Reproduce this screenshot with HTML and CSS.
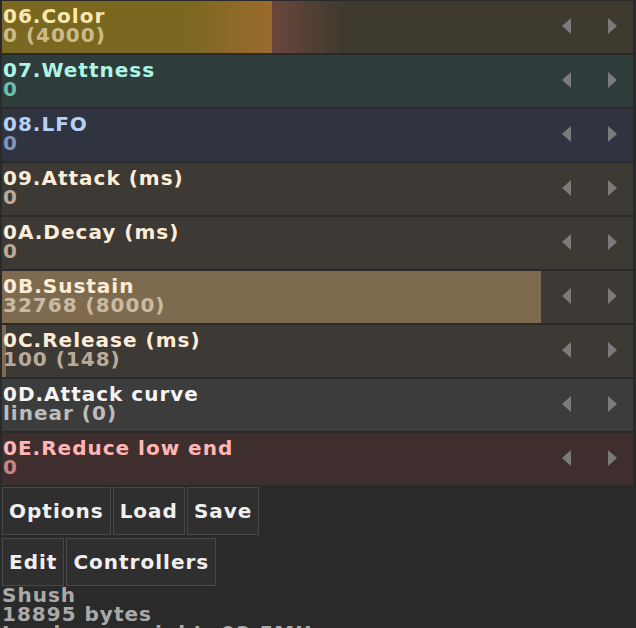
FILE: index.html
```html
<!DOCTYPE html>
<html>

<head>
    <meta charset="UTF-8">
    <title>Shush</title>
    <link rel="stylesheet" href="styles.css">
</head>

<body>

    <div class="params">
        <div class="param color">
            <div class="fill glow" style="width: 42.8%"></div>
            <div class="info">
                <div class="name">06.Color</div>
                <div class="value">0 (4000)</div>
            </div>
            <div class="arrows">
                <svg width="9" height="16" viewBox="0 0 9 16"><path d="M9 0 L0 8 L9 16 Z"/></svg>
                <svg width="9" height="16" viewBox="0 0 9 16"><path d="M0 0 L9 8 L0 16 Z"/></svg>
            </div>
        </div>

        <div class="param wet">
            <div class="info">
                <div class="name">07.Wettness</div>
                <div class="value">0</div>
            </div>
            <div class="arrows">
                <svg width="9" height="16" viewBox="0 0 9 16"><path d="M9 0 L0 8 L9 16 Z"/></svg>
                <svg width="9" height="16" viewBox="0 0 9 16"><path d="M0 0 L9 8 L0 16 Z"/></svg>
            </div>
        </div>

        <div class="param lfo">
            <div class="info">
                <div class="name">08.LFO</div>
                <div class="value">0</div>
            </div>
            <div class="arrows">
                <svg width="9" height="16" viewBox="0 0 9 16"><path d="M9 0 L0 8 L9 16 Z"/></svg>
                <svg width="9" height="16" viewBox="0 0 9 16"><path d="M0 0 L9 8 L0 16 Z"/></svg>
            </div>
        </div>

        <div class="param env">
            <div class="info">
                <div class="name">09.Attack (ms)</div>
                <div class="value">0</div>
            </div>
            <div class="arrows">
                <svg width="9" height="16" viewBox="0 0 9 16"><path d="M9 0 L0 8 L9 16 Z"/></svg>
                <svg width="9" height="16" viewBox="0 0 9 16"><path d="M0 0 L9 8 L0 16 Z"/></svg>
            </div>
        </div>

        <div class="param env">
            <div class="info">
                <div class="name">0A.Decay (ms)</div>
                <div class="value">0</div>
            </div>
            <div class="arrows">
                <svg width="9" height="16" viewBox="0 0 9 16"><path d="M9 0 L0 8 L9 16 Z"/></svg>
                <svg width="9" height="16" viewBox="0 0 9 16"><path d="M0 0 L9 8 L0 16 Z"/></svg>
            </div>
        </div>

        <div class="param env">
            <div class="fill" style="width: 85.4%"></div>
            <div class="info">
                <div class="name">0B.Sustain</div>
                <div class="value lit">32768 (8000)</div>
            </div>
            <div class="arrows">
                <svg width="9" height="16" viewBox="0 0 9 16"><path d="M9 0 L0 8 L9 16 Z"/></svg>
                <svg width="9" height="16" viewBox="0 0 9 16"><path d="M0 0 L9 8 L0 16 Z"/></svg>
            </div>
        </div>

        <div class="param env">
            <div class="fill" style="width: 0.65%"></div>
            <div class="info">
                <div class="name">0C.Release (ms)</div>
                <div class="value">100 (148)</div>
            </div>
            <div class="arrows">
                <svg width="9" height="16" viewBox="0 0 9 16"><path d="M9 0 L0 8 L9 16 Z"/></svg>
                <svg width="9" height="16" viewBox="0 0 9 16"><path d="M0 0 L9 8 L0 16 Z"/></svg>
            </div>
        </div>

        <div class="param curve">
            <div class="info">
                <div class="name">0D.Attack curve</div>
                <div class="value">linear (0)</div>
            </div>
            <div class="arrows">
                <svg width="9" height="16" viewBox="0 0 9 16"><path d="M9 0 L0 8 L9 16 Z"/></svg>
                <svg width="9" height="16" viewBox="0 0 9 16"><path d="M0 0 L9 8 L0 16 Z"/></svg>
            </div>
        </div>

        <div class="param low">
            <div class="info">
                <div class="name">0E.Reduce low end</div>
                <div class="value">0</div>
            </div>
            <div class="arrows">
                <svg width="9" height="16" viewBox="0 0 9 16"><path d="M9 0 L0 8 L9 16 Z"/></svg>
                <svg width="9" height="16" viewBox="0 0 9 16"><path d="M0 0 L9 8 L0 16 Z"/></svg>
            </div>
        </div>
    </div>

    <div class="btn-row first">
        <button class="btn">Options</button>
        <button class="btn">Load</button>
        <button class="btn">Save</button>
    </div>
    <div class="btn-row">
        <button class="btn">Edit</button>
        <button class="btn">Controllers</button>
    </div>

    <div class="status">
        <div>Shush</div>
        <div>18895 bytes</div>
        <div>Lua heap weight: 03.5MU</div>
    </div>

</body>

</html>
```

FILE: styles.css
```css
/* Basic Reset */
* {
    box-sizing: border-box;
    margin: 0;
    padding: 0;
}

body {
    font-family: "DejaVu Sans", sans-serif;
    font-weight: bold;
    font-size: 20px;
    line-height: 19px;
    letter-spacing: 1px;
    background: #2a2a2a;
    padding: 1px 3px 0 2px;
    overflow: hidden;
}

.params {
    display: flex;
    flex-direction: column;
    gap: 2px;
}

.param {
    position: relative;
    display: flex;
    align-items: center;
    height: 52px;
    background: #3d3934;
}

.fill {
    position: absolute;
    left: 0;
    top: 0;
    bottom: 0;
    background: #7e6b4f;
}

.fill.glow {
    background: linear-gradient(to right, #7a6820 0%, #7a6820 68%, #9c6b2c 100%);
}

.fill.glow::after {
    content: "";
    position: absolute;
    left: 100%;
    top: 0;
    bottom: 0;
    width: 70px;
    background: linear-gradient(to right, #6b463c, rgba(63, 58, 47, 0));
}

.info {
    position: relative;
    flex: 1;
    padding: 0 0 2px 1px;
    white-space: nowrap;
}

.arrows {
    position: relative;
    display: flex;
    align-items: center;
    gap: 37px;
    padding: 0 16px 2px 0;
}

.arrows svg {
    display: block;
    fill: #7b7b7b;
}

/* row colours */
.color { background: #3f3a2f; }
.color .name { color: #fbe7b0; }
.color .value { color: #cbbb88; }

.wet { background: #2e3d3b; }
.wet .name { color: #aef5e6; }
.wet .value { color: #6dbdad; }

.lfo { background: #2f3440; }
.lfo .name { color: #b8cff7; }
.lfo .value { color: #7f95bd; }

.env .name { color: #fcecd8; }
.env .value { color: #b9ab98; }
.env .value.lit { color: #c9baa3; }

.curve { background: #3c3c3c; }
.curve .name { color: #f5f5f5; }
.curve .value { color: #bdbdbd; }

.low { background: #3f2e2e; }
.low .name { color: #ffb6b6; }
.low .value { color: #c98585; }

.btn-row {
    display: flex;
    gap: 2px;
    margin-top: 3px;
}

.btn-row.first {
    margin-top: 2px;
}

.btn {
    font: inherit;
    letter-spacing: inherit;
    height: 48px;
    padding: 0 6px;
    background: #2f2f2f;
    border: 1px solid #484848;
    color: #f0f0f0;
}

.status {
    color: #a9a9a9;
}
```
